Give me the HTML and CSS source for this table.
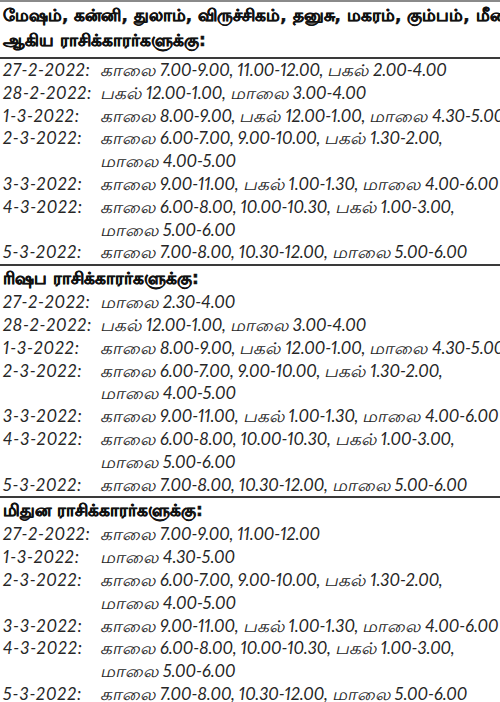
FILE: index.html
```html
<!DOCTYPE html>
<html lang="ta">
<head>
<meta charset="utf-8">
<title>ராசிக்காரர்களுக்கு நேரம்</title>
<link rel="stylesheet" href="styles.css">
</head>
<body>
<div class="page">
  <section class="block first">
    <h2 class="title">மேஷம், கன்னி, துலாம், விருச்சிகம், தனுசு, மகரம், கும்பம், மீனம்</h2>
    <h2 class="title">ஆகிய ராசிக்காரர்களுக்கு:</h2>
  </section>
  <section class="block">
    <div class="rows">
      <div class="row"><span class="d">27-2-2022:</span><span class="t"><span class="w">காலை</span> 7.00-9.00, 11.00-12.00, <span class="w">பகல்</span> 2.00-4.00</span></div>
      <div class="row"><span class="d">28-2-2022:</span><span class="t"><span class="w">பகல்</span> 12.00-1.00, <span class="w">மாலை</span> 3.00-4.00</span></div>
      <div class="row"><span class="d">1-3-2022:</span><span class="t"><span class="w">காலை</span> 8.00-9.00, <span class="w">பகல்</span> 12.00-1.00, <span class="w">மாலை</span> 4.30-5.00</span></div>
      <div class="row"><span class="d">2-3-2022:</span><span class="t"><span class="w">காலை</span> 6.00-7.00, 9.00-10.00, <span class="w">பகல்</span> 1.30-2.00,<br><span class="w">மாலை</span> 4.00-5.00</span></div>
      <div class="row"><span class="d">3-3-2022:</span><span class="t"><span class="w">காலை</span> 9.00-11.00, <span class="w">பகல்</span> 1.00-1.30, <span class="w">மாலை</span> 4.00-6.00</span></div>
      <div class="row"><span class="d">4-3-2022:</span><span class="t"><span class="w">காலை</span> 6.00-8.00, 10.00-10.30, <span class="w">பகல்</span> 1.00-3.00,<br><span class="w">மாலை</span> 5.00-6.00</span></div>
      <div class="row"><span class="d">5-3-2022:</span><span class="t"><span class="w">காலை</span> 7.00-8.00, 10.30-12.00, <span class="w">மாலை</span> 5.00-6.00</span></div>
    </div>
  </section>
  <section class="block">
    <h2 class="title">ரிஷப ராசிக்காரர்களுக்கு:</h2>
    <div class="rows">
      <div class="row"><span class="d">27-2-2022:</span><span class="t"><span class="w">மாலை</span> 2.30-4.00</span></div>
      <div class="row"><span class="d">28-2-2022:</span><span class="t"><span class="w">பகல்</span> 12.00-1.00, <span class="w">மாலை</span> 3.00-4.00</span></div>
      <div class="row"><span class="d">1-3-2022:</span><span class="t"><span class="w">காலை</span> 8.00-9.00, <span class="w">பகல்</span> 12.00-1.00, <span class="w">மாலை</span> 4.30-5.00</span></div>
      <div class="row"><span class="d">2-3-2022:</span><span class="t"><span class="w">காலை</span> 6.00-7.00, 9.00-10.00, <span class="w">பகல்</span> 1.30-2.00,<br><span class="w">மாலை</span> 4.00-5.00</span></div>
      <div class="row"><span class="d">3-3-2022:</span><span class="t"><span class="w">காலை</span> 9.00-11.00, <span class="w">பகல்</span> 1.00-1.30, <span class="w">மாலை</span> 4.00-6.00</span></div>
      <div class="row"><span class="d">4-3-2022:</span><span class="t"><span class="w">காலை</span> 6.00-8.00, 10.00-10.30, <span class="w">பகல்</span> 1.00-3.00,<br><span class="w">மாலை</span> 5.00-6.00</span></div>
      <div class="row"><span class="d">5-3-2022:</span><span class="t"><span class="w">காலை</span> 7.00-8.00, 10.30-12.00, <span class="w">மாலை</span> 5.00-6.00</span></div>
    </div>
  </section>
  <section class="block last">
    <h2 class="title">மிதுன ராசிக்காரர்களுக்கு:</h2>
    <div class="rows">
      <div class="row"><span class="d">27-2-2022:</span><span class="t"><span class="w">காலை</span> 7.00-9.00, 11.00-12.00</span></div>
      <div class="row"><span class="d">1-3-2022:</span><span class="t"><span class="w">மாலை</span> 4.30-5.00</span></div>
      <div class="row"><span class="d">2-3-2022:</span><span class="t"><span class="w">காலை</span> 6.00-7.00, 9.00-10.00, <span class="w">பகல்</span> 1.30-2.00,<br><span class="w">மாலை</span> 4.00-5.00</span></div>
      <div class="row"><span class="d">3-3-2022:</span><span class="t"><span class="w">காலை</span> 9.00-11.00, <span class="w">பகல்</span> 1.00-1.30, <span class="w">மாலை</span> 4.00-6.00</span></div>
      <div class="row"><span class="d">4-3-2022:</span><span class="t"><span class="w">காலை</span> 6.00-8.00, 10.00-10.30, <span class="w">பகல்</span> 1.00-3.00,<br><span class="w">மாலை</span> 5.00-6.00</span></div>
      <div class="row"><span class="d">5-3-2022:</span><span class="t"><span class="w">காலை</span> 7.00-8.00, 10.30-12.00, <span class="w">மாலை</span> 5.00-6.00</span></div>
    </div>
  </section>
</div>
</body>
</html>
```
FILE: styles.css
```css
html, body {
  margin: 0;
  padding: 0;
  background: #ffffff;
}
.page {
  width: 500px;
  height: 702px;
  overflow: hidden;
  border-top: 2px solid #8a8a8a;
  font-family: "DejaVu Sans", "Noto Sans", sans-serif;
  color: #2b2b2b;
}
.block {
  border-bottom: 2px solid #3a3a3a;
  padding: 0 0 0 3px;
}
.block.last {
  border-bottom: none;
}
.title {
  margin: 0;
  font-size: 17px;
  font-weight: bold;
  line-height: 25px;
  white-space: nowrap;
  color: #111;
  -webkit-text-stroke: 0.4px #111;
}
.first {
  padding-top: 1px;
  padding-bottom: 4px;
}
.rows {
  display: flex;
  flex-direction: column;
}
.row {
  display: grid;
  grid-template-columns: 97px 1fr;
  font-family: "Lato", "DejaVu Sans", sans-serif;
  font-style: italic;
  font-size: 17px;
  line-height: 22.8px;
  white-space: nowrap;
  font-variant-numeric: proportional-nums;
  color: #262626;
}
.d {
  letter-spacing: 0.9px;
}
.t {
  overflow: visible;
}
.w {
  display: inline-block;
  font-family: "DejaVu Sans", "Noto Sans", sans-serif;
  font-style: normal;
  font-size: 19px;
  line-height: 16px;
  transform: scale(1, 0.84) skewX(-10deg);
  transform-origin: 50% 85%;
}
```
